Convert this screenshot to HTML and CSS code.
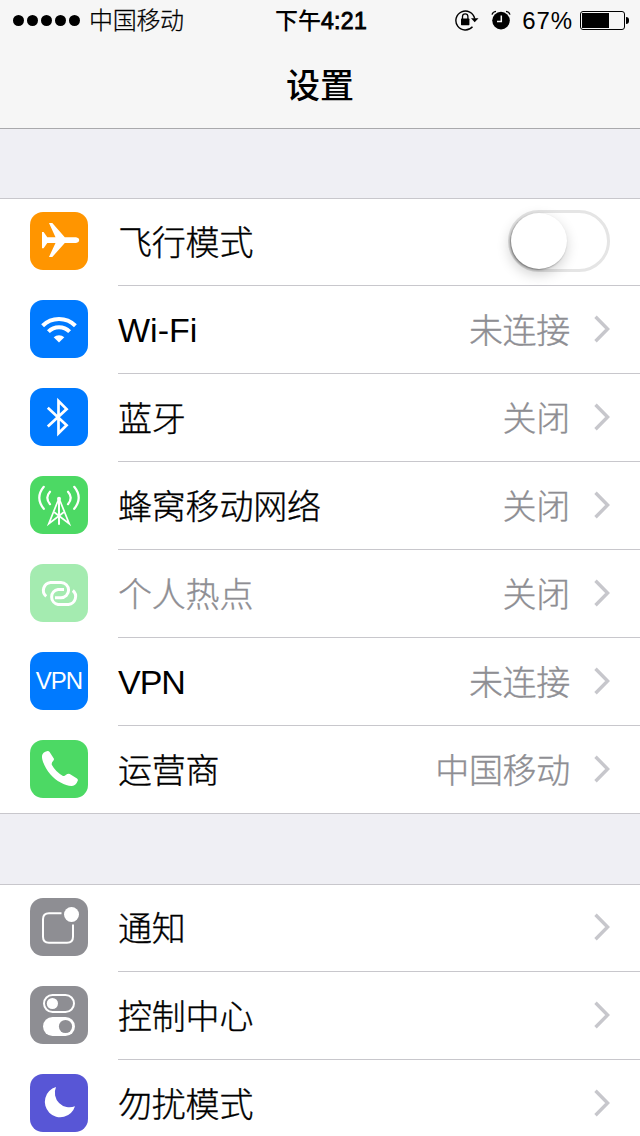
FILE: index.html
```
<!DOCTYPE html>
<html lang="zh-CN">
<head>
  <meta charset="UTF-8" />
  <meta name="viewport" content="width=device-width, initial-scale=1.0"/>
  <title>设置</title>
  <link rel="stylesheet" href="styles.css">
</head>
<body>
  <svg class="defs" width="0" height="0">
    <symbol id="chevron" viewBox="0 0 16 28">
      <path d="M1.5 1.7 L13.6 14 L1.5 26.3" fill="none" stroke="#c7c7cc" stroke-width="3.4"/>
    </symbol>
  </svg>

  <header class="top">
    <div class="status-bar">
      <div class="carrier">
        <div class="signal"><i></i><i></i><i></i><i></i><i></i></div>
        <span>中国移动</span>
      </div>
      <div class="time">下午<b>4:21</b></div>
      <div class="status-right">
        <svg class="lock" width="24" height="22" viewBox="0 0 24 22">
          <path d="M17.5 17.8 A9.5 9.5 0 1 1 19.7 9.6" fill="none" stroke="#000" stroke-width="1.4"/>
          <path d="M16 9.3 H23.5 L19.7 13.3 Z"/>
          <rect x="6" y="9.6" width="8.4" height="6.6" rx="0.6"/>
          <path d="M7.5 10 V7.6 a2.7 2.7 0 0 1 5.4 0 V10" fill="none" stroke="#000" stroke-width="1.3"/>
        </svg>
        <svg class="alarm" width="20" height="20" viewBox="0 0 20 20">
          <circle cx="10" cy="10.6" r="8.8"/>
          <path d="M1 4.6 Q1.8 1.8 5 1.4 M19 4.6 Q18.2 1.8 15 1.4" fill="none" stroke="#000" stroke-width="1.3"/>
          <path d="M10.3 5.4 V11.4 H6" fill="none" stroke="#f6f6f6" stroke-width="1.5"/>
        </svg>
        <span class="percent">67%</span>
        <div class="battery"><div class="level"></div></div>
        <div class="battery-tip"></div>
      </div>
    </div>
    <h1>设置</h1>
  </header>

  <main>
    <ul class="group">
      <li class="row">
        <div class="icon orange">
          <svg viewBox="0 0 58 58"><path fill="#fff" d="M12 20 H13.6 L17.3 25.2 H25.5 L19 11 H22.3 L34.8 25.2 H46 Q49.2 25.8 49.2 28 Q49.2 30.4 46 31 H34.8 L22.3 45 H19 L25.5 31 H17.3 L13.6 36.2 H12 V20 Z"/></svg>
        </div>
        <div class="content">
          <span class="label">飞行模式</span>
          <div class="switch"><div class="knob"></div></div>
        </div>
      </li>
      <li class="row">
        <div class="icon blue">
          <svg viewBox="0 0 58 58">
            <path d="M12.6 25.7 A23.4 23.4 0 0 1 45.4 25.7 M18.4 31.7 A15 15 0 0 1 39.6 31.7" fill="none" stroke="#fff" stroke-width="4"/>
            <path fill="#fff" d="M29 42.6 L23.7 37.3 A7.6 7.6 0 0 1 34.3 37.3 Z"/>
          </svg>
        </div>
        <div class="content">
          <span class="label latin">Wi-Fi</span>
          <span class="value">未连接</span>
          <svg class="chevron"><use href="#chevron"/></svg>
        </div>
      </li>
      <li class="row">
        <div class="icon blue">
          <svg viewBox="0 0 58 58"><path d="M17.8 19.8 L36.6 37.3 L28.5 45.3 V13 L36.6 21.1 L17.8 38.6" fill="none" stroke="#fff" stroke-width="2.7"/></svg>
        </div>
        <div class="content">
          <span class="label">蓝牙</span>
          <span class="value">关闭</span>
          <svg class="chevron"><use href="#chevron"/></svg>
        </div>
      </li>
      <li class="row">
        <div class="icon green">
          <svg viewBox="0 0 58 58" fill="none" stroke="#fff" stroke-linecap="round">
            <path stroke-width="2.2" d="M13.8 10.8 Q4.8 21.7 13.8 32.8 M44.2 10.8 Q53.2 21.7 44.2 32.8 M20 15.7 Q14.6 21.7 20 28.2 M38 15.7 Q43.4 21.7 38 28.2"/>
            <path stroke-width="1.7" d="M28.5 23.5 L18.8 47.6 L33.4 36.5 M29.5 23.5 L39.2 47.6 L24.6 36.5"/>
            <path stroke-width="2" d="M29 23 V48"/>
            <circle cx="29" cy="22.8" r="2" fill="#fff" stroke="none"/>
          </svg>
        </div>
        <div class="content">
          <span class="label">蜂窝移动网络</span>
          <span class="value">关闭</span>
          <svg class="chevron"><use href="#chevron"/></svg>
        </div>
      </li>
      <li class="row disabled">
        <div class="icon green">
          <svg viewBox="0 0 58 58"><path d="M16.2 32.4 A7.9 7.9 0 0 1 20.5 18.5 H31 A7.6 7.6 0 0 1 31 33.7 H25 M42.8 26.5 A7.9 7.9 0 0 1 38.5 40.4 H28 A7.6 7.6 0 0 1 28 25.4 H34" fill="none" stroke="#fff" stroke-width="3"/></svg>
        </div>
        <div class="content">
          <span class="label">个人热点</span>
          <span class="value">关闭</span>
          <svg class="chevron"><use href="#chevron"/></svg>
        </div>
      </li>
      <li class="row">
        <div class="icon blue vpn">VPN</div>
        <div class="content">
          <span class="label latin tight">VPN</span>
          <span class="value">未连接</span>
          <svg class="chevron"><use href="#chevron"/></svg>
        </div>
      </li>
      <li class="row">
        <div class="icon green">
          <svg viewBox="0 0 58 58"><path fill="#fff" d="M17.6 10.9 Q18.8 10.8 19.6 12 L23.8 18.6 Q24.3 19.6 23.3 20.8 Q21.3 22.8 21.8 24.8 Q25.5 31.8 33 36 Q34.6 36.4 36 34.8 Q38 33.2 39.8 33.9 L47 38.4 Q48.4 39.6 47.6 41 Q46 45.6 42 46 C36 46.4 26 41 20.5 34.5 C15 28 11.6 20 12 16 Q12.4 12 17.6 10.9 Z"/></svg>
        </div>
        <div class="content">
          <span class="label">运营商</span>
          <span class="value">中国移动</span>
          <svg class="chevron"><use href="#chevron"/></svg>
        </div>
      </li>
    </ul>

    <ul class="group">
      <li class="row">
        <div class="icon gray">
          <svg viewBox="0 0 58 58">
            <path d="M31.5 15.2 H19 Q13 15.2 13 21.2 V38.8 Q13 44.8 19 44.8 H37 Q43 44.8 43 38.8 V26.6" fill="none" stroke="#fff" stroke-width="2"/>
            <circle cx="41.5" cy="16.5" r="7.5" fill="#fff"/>
          </svg>
        </div>
        <div class="content">
          <span class="label">通知</span>
          <svg class="chevron"><use href="#chevron"/></svg>
        </div>
      </li>
      <li class="row">
        <div class="icon gray">
          <svg viewBox="0 0 58 58">
            <rect x="14" y="9" width="30" height="17" rx="8.5" fill="none" stroke="#fff" stroke-width="2"/>
            <circle cx="22.4" cy="17.5" r="5.6" fill="#fff"/>
            <rect x="13" y="31" width="32" height="19" rx="9.5" fill="#fff"/>
            <circle cx="35.5" cy="40.5" r="6.6" fill="#8e8e93"/>
          </svg>
        </div>
        <div class="content">
          <span class="label">控制中心</span>
          <svg class="chevron"><use href="#chevron"/></svg>
        </div>
      </li>
      <li class="row">
        <div class="icon purple">
          <svg viewBox="0 0 58 58"><path fill="#fff" d="M26 13 A15.4 15.4 0 1 0 45 32.2 A14.6 14.6 0 0 1 26 13 Z"/></svg>
        </div>
        <div class="content">
          <span class="label">勿扰模式</span>
          <svg class="chevron"><use href="#chevron"/></svg>
        </div>
      </li>
    </ul>
  </main>
</body>
</html>
```
FILE: styles.css
```
* {
  box-sizing: border-box;
  margin: 0;
  padding: 0;
}

body {
  width: 640px;
  height: 1136px;
  overflow: hidden;
  background: #efeff4;
  color: #000;
  font-family: "Liberation Sans", "Noto Sans CJK SC", sans-serif;
  font-weight: 300;
}

.defs {
  display: block;
}

.top {
  height: 129px;
  background: #f6f6f6;
  border-bottom: 1px solid #a9a9ac;
}

.status-bar {
  display: grid;
  grid-template-columns: 1fr auto 1fr;
  align-items: center;
  height: 40px;
  padding: 0 11px 0 13px;
  font-size: 24px;
  line-height: 40px;
}

.carrier {
  display: flex;
  align-items: center;
  gap: 9px;
  letter-spacing: -0.3px;
}

.carrier span {
  padding-top: 2px;
  line-height: 38px;
  -webkit-text-stroke: 0.25px;
}

.signal {
  display: flex;
  gap: 3px;
}

.signal i {
  width: 11px;
  height: 11px;
  border-radius: 50%;
  background: #000;
}

.time {
  padding-top: 2px;
  font-weight: 500;
  font-size: 23px;
  line-height: 38px;
}

/* medium weight for the digits */
.time b {
  font-weight: normal;
  letter-spacing: 0.3px;
  -webkit-text-stroke: 0.9px;
}

.status-right {
  display: flex;
  align-items: center;
  justify-content: flex-end;
}

.alarm {
  margin-left: 12px;
}

.percent {
  padding-top: 2px;
  margin: 0 7px 0 11px;
  line-height: 38px;
  letter-spacing: 0.9px;
}

.battery {
  width: 45px;
  height: 19px;
  padding: 1px;
  border: 1px solid #000;
  border-radius: 3px;
}

.level {
  width: 27px;
  height: 15px;
  background: #000;
}

.battery-tip {
  width: 3px;
  height: 7px;
  margin-left: 1px;
  border-radius: 0 3px 3px 0;
  background: #000;
}

h1 {
  height: 88px;
  padding-top: 4px;
  font-size: 34px;
  font-weight: 500;
  line-height: 84px;
  text-align: center;
}

.group {
  list-style: none;
  margin-top: 69px;
  background: #fff;
  box-shadow: inset 0 1px #c8c7cc;
}

.group + .group {
  margin-top: 70px;
}

.row {
  display: flex;
  height: 88px;
  padding-left: 30px;
}

.icon {
  flex: none;
  width: 58px;
  height: 58px;
  margin: 14px 30px 0 0;
  border-radius: 13px;
}

.icon svg {
  display: block;
  width: 58px;
  height: 58px;
}

.orange { background: #ff9500; }
.blue { background: #007aff; }
.green { background: #4cd964; }
.gray { background: #8e8e93; }
.purple { background: #5856d6; }

.vpn {
  color: #fff;
  font-size: 24px;
  line-height: 58px;
  letter-spacing: -1px;
  text-align: center;
}

.content {
  flex: 1;
  display: flex;
  align-items: center;
  padding-right: 30px;
  border-bottom: 1px solid #c8c7cc;
  font-size: 34px;
  line-height: 83px;
}

.row:last-child .content {
  border-bottom: none;
}

.group .row:last-child {
  border-bottom: 1px solid #c8c7cc;
}

.label,
.value {
  padding-top: 4px;
  -webkit-text-stroke: 0.35px;
}

.label {
  flex: 1;
  letter-spacing: -0.2px;
}

.latin {
  padding-top: 2px;
  line-height: 85px;
  letter-spacing: 0;
  -webkit-text-stroke: 0;
}

.tight {
  letter-spacing: -1px;
}

.value {
  color: #8e8e93;
  letter-spacing: -0.3px;
}

.chevron {
  width: 16px;
  height: 28px;
  margin: 0 0 1px 24px;
}

.disabled .icon {
  opacity: 0.5;
}

.disabled .label {
  color: #8e8e93;
}

.switch {
  width: 102px;
  height: 62px;
  margin-bottom: 1px;
  border: 3px solid #e5e5e5;
  border-radius: 31px;
}

.knob {
  width: 56px;
  height: 56px;
  border-radius: 50%;
  background: #fff;
  box-shadow: -1px 1px 2px rgba(0, 0, 0, 0.4), -1px 5px 14px rgba(0, 0, 0, 0.2);
}
```
